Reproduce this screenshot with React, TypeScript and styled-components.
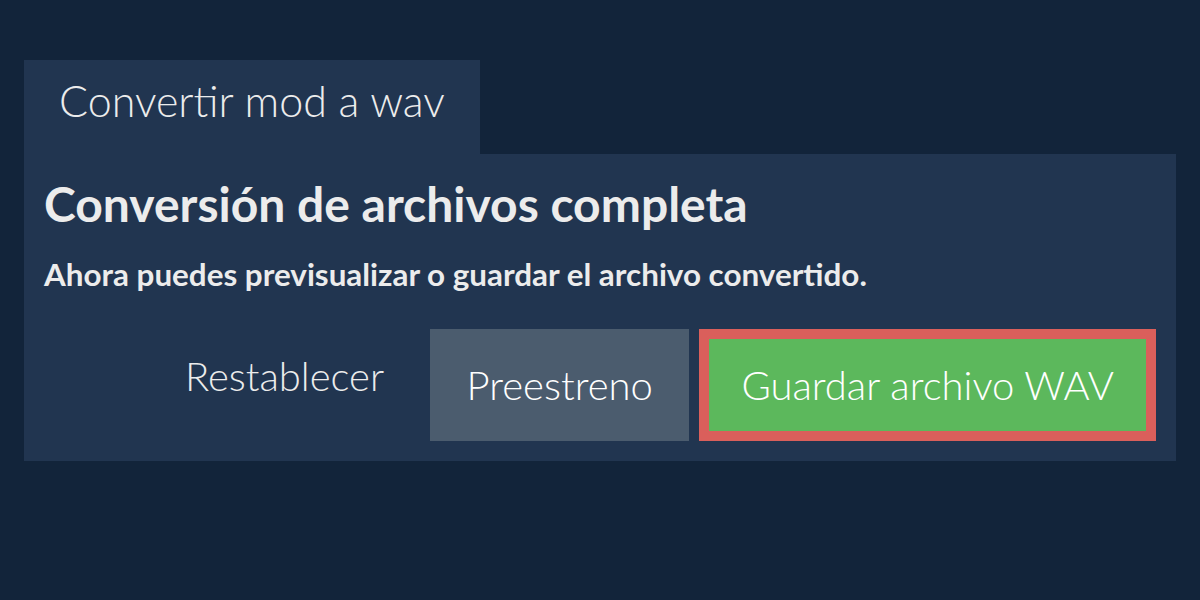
import React from 'react';
import styled, { createGlobalStyle } from 'styled-components';

const Global = createGlobalStyle`
  html, body {
    margin: 0;
    padding: 0;
    background: #12243a;
    font-family: Lato, "Noto Sans", sans-serif;
    color: #ececec;
  }
`;

const Page = styled.div`
  width: 1200px;
  height: 600px;
  box-sizing: border-box;
  padding: 60px 24px 0;
  display: flex;
  flex-direction: column;
  align-items: flex-start;
`;

const Tab = styled.div`
  background: #213550;
  height: 94px;
  box-sizing: border-box;
  padding: 15px 35px 0;
  font-size: 43px;
  font-weight: 300;
  line-height: normal;
  white-space: nowrap;
`;

const Panel = styled.section`
  align-self: stretch;
  background: #213550;
  padding: 20px;
  display: flex;
  flex-direction: column;
`;

const Heading = styled.h1`
  margin: 0;
  font-size: 48px;
  font-weight: 700;
  line-height: 60px;
`;

const Lead = styled.p`
  margin: 20px 0 0;
  font-size: 31.4px;
  font-weight: 700;
  line-height: 40px;
`;

const Actions = styled.div`
  margin-top: 35px;
  display: flex;
  justify-content: flex-end;
  align-items: flex-start;
  gap: 10px;
`;

const LinkButton = styled.button`
  border: 0;
  background: none;
  color: inherit;
  font-family: inherit;
  font-size: 40px;
  font-weight: 300;
  line-height: normal;
  padding: 23px 36px 0 0;
`;

const Button = styled.button<{ $tone: 'grey' | 'green' }>`
  height: 112px;
  box-sizing: border-box;
  padding: 0 ${p => (p.$tone === 'green' ? 32 : 36.5)}px;
  display: flex;
  align-items: center;
  border: ${p => (p.$tone === 'green' ? '10px solid #da5f5b' : '0')};
  background: ${p => (p.$tone === 'green' ? '#5cb85c' : '#4b5c6e')};
  color: #fff;
  font-family: inherit;
  font-size: 40px;
  font-weight: 300;
  line-height: normal;
  white-space: nowrap;
`;

export default function App() {
  return (
    <>
      <Global />
      <Page>
        <Tab>Convertir mod a wav</Tab>
        <Panel>
          <Heading>Conversión de archivos completa</Heading>
          <Lead>Ahora puedes previsualizar o guardar el archivo convertido.</Lead>
          <Actions>
            <LinkButton>Restablecer</LinkButton>
            <Button $tone="grey">Preestreno</Button>
            <Button $tone="green">Guardar archivo WAV</Button>
          </Actions>
        </Panel>
      </Page>
    </>
  );
}
